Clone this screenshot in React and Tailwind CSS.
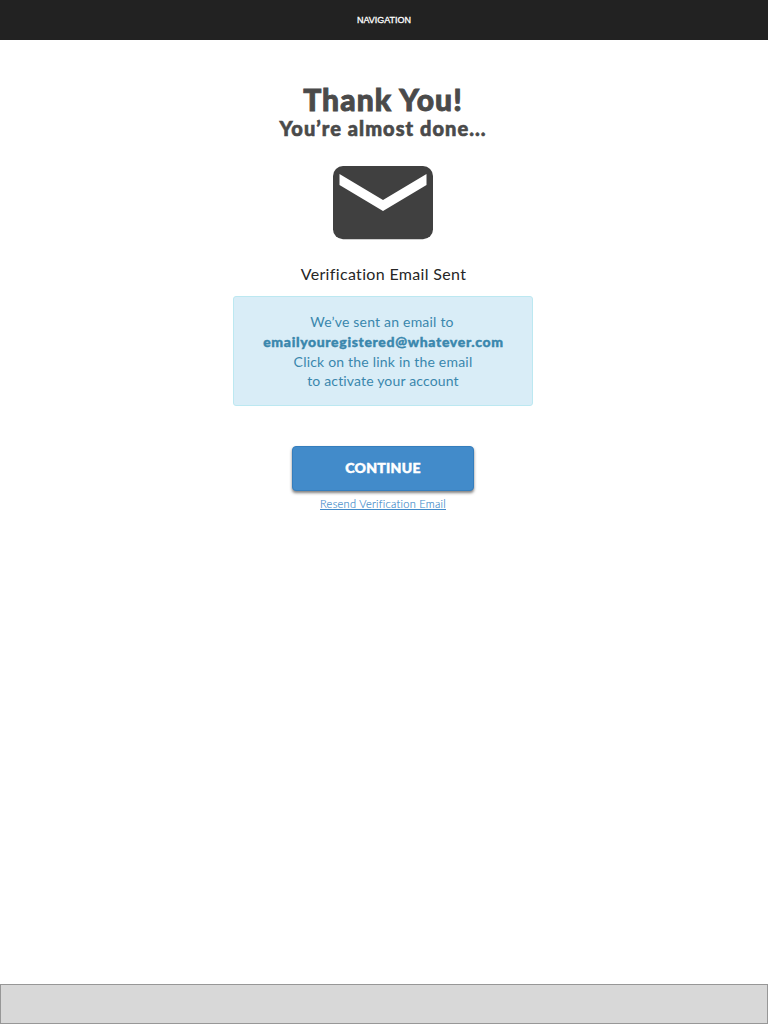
function Mail() {
  return (
    <svg className="mt-[25px] h-[74px] w-[100px]" viewBox="0 0 100 74" aria-hidden="true">
      <rect width="100" height="73.3" rx="10" fill="#404040" />
      <path d="M6.5 8 50 34 93.5 8V19L50 45 6.5 19Z" fill="#fff" />
    </svg>
  );
}

export default function App() {
  return (
    <div className="flex h-screen flex-col bg-white font-['Lato',sans-serif]">
      <nav className="flex h-10 shrink-0 items-center justify-center bg-[#222222] pt-px font-['Liberation_Sans',sans-serif] text-[9px] tracking-[0px] text-white [-webkit-text-stroke:0.3px_white]">
        <span>NAVIGATION</span>
      </nav>
      <main className="flex w-[766px] flex-1 flex-col items-center pt-10 whitespace-nowrap">
        <h1 className="pt-[2px] text-[30px] leading-[34px] font-black tracking-[1.1px] text-[#4a4a4a] [-webkit-text-stroke:0.9px_#4a4a4a]">Thank You!</h1>
        <h2 className="text-[20px] leading-[25px] font-black tracking-[1.05px] text-[#4a4a4a] [-webkit-text-stroke:0.6px_#4a4a4a]">You’re almost done...</h2>
        <Mail />
        <p className="mt-[22px] pl-px text-[16px] leading-6 tracking-[0.34px] text-[#262626]">Verification Email Sent</p>
        <div className="mt-[10px] flex h-[110px] w-[300px] flex-col items-center rounded-[3px] border border-[#bce8f1] bg-[#d9edf7] pt-[15px] text-[14px] leading-5 tracking-[0.2px] text-[#3a87ad]">
          <span className="pr-[2px]">We’ve sent an email to</span>
          <span className="pl-px font-black tracking-[0.66px] [-webkit-text-stroke:0.4px_#3a87ad]">emailyouregistered@whatever.com</span>
          <span>Click on the link in the email</span>
          <span className="leading-[18px] tracking-[0.16px]">to activate your account</span>
        </div>
        <button className="mt-10 h-[45px] w-[182px] rounded-[4px] border border-[#357ebd] bg-[#428bca] pb-[2px] text-[14px] font-black tracking-[0.3px] text-white shadow-[0_2px_3px_rgba(0,0,0,0.5)] [-webkit-text-stroke:0.5px_white]">
          <span>CONTINUE</span>
        </button>
        <a href="#" className="mt-[5px] text-[11px] leading-4 font-light tracking-[0.28px] text-[#428bca] underline decoration-[#428bca] [-webkit-text-stroke:0.15px_#428bca]">Resend Verification Email</a>
      </main>
      <footer className="h-10 shrink-0 border border-[#979797] bg-[#d8d8d8]" />
    </div>
  );
}
